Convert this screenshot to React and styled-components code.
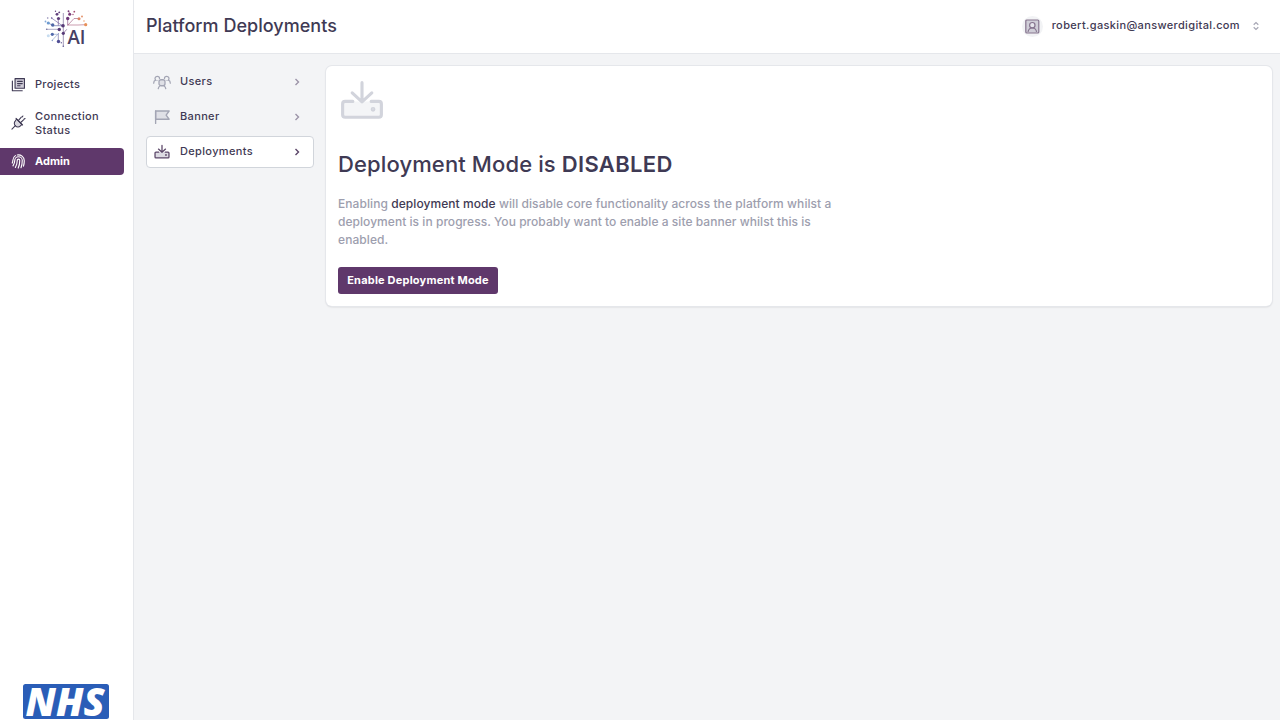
import React from "react";
import styled, { createGlobalStyle } from "styled-components";

const Global = createGlobalStyle`
  *, *::before, *::after { box-sizing: border-box; }
  body { margin: 0; background: #f3f4f6; color: #3f3a54; font: 500 11px/14px Inter, sans-serif; }
  h1, h2, p { margin: 0; }
  svg { display: block; flex: none; }
`;

const Shell = styled.div`
  display: flex;
  height: 100vh;
  overflow: hidden;
`;

const Sidebar = styled.aside`
  display: flex;
  flex-direction: column;
  width: 134px;
  flex: none;
  background: #fff;
  border-right: 1px solid #e5e7eb;
`;

const LogoSlot = styled.div`
  display: flex;
  justify-content: center;
  height: 71px;
  padding-top: 8px;
`;

const Nav = styled.nav`
  display: flex;
  flex-direction: column;
  flex: 1;
  gap: 6px;
  padding-right: 9px;
`;

const NavItem = styled.a`
  display: flex;
  align-items: center;
  gap: 9px;
  min-height: 27px;
  padding: ${(p) => (p.$tall ? "5px 12px 5px 11px" : "0 12px 1px 11px")};
  border-radius: 0 4px 4px 0;
  color: ${(p) => (p.$active ? "#fff" : "#3f3a54")};
  background: ${(p) => (p.$active ? "#5f386b" : "transparent")};
  font-weight: ${(p) => (p.$active ? 700 : 500)};
  letter-spacing: ${(p) => p.$track || 0}px;

  svg { margin-bottom: ${(p) => (p.$tall ? 2 : 0)}px; }
`;

const NhsSlot = styled.div`
  display: flex;
  padding: 0 0 1px 23px;
`;

const Main = styled.div`
  display: flex;
  flex-direction: column;
  flex: 1;
  min-width: 0;
`;

const Header = styled.header`
  display: flex;
  align-items: center;
  justify-content: space-between;
  height: 54px;
  flex: none;
  padding: 0 20px 1px 12px;
  background: #fff;
  border-bottom: 1px solid #e5e7eb;
`;

const PageTitle = styled.h1`
  font-size: 18px;
  line-height: 24px;
  font-weight: 500;
  letter-spacing: 0.03px;
`;

const Account = styled.div`
  display: flex;
  align-items: center;
  font-size: 11px;
  letter-spacing: 0.36px;
`;

const Email = styled.span`
  margin-bottom: 2px;
`;

const Avatar = styled.span`
  display: grid;
  place-items: center;
  width: 21px;
  height: 21px;
  margin-right: 9px;
  border-radius: 50%;
  background: #f2f3f5;
`;

const Chevrons = styled.span`
  margin-left: 12px;
  color: #a6a6b4;
`;

const Content = styled.div`
  display: flex;
  align-items: flex-start;
  gap: 12px;
  padding: 12px 8px 0 12px;
`;

const SubNav = styled.nav`
  display: flex;
  flex-direction: column;
  gap: 3px;
  width: 168px;
  flex: none;
`;

const SubItem = styled.a`
  display: flex;
  align-items: center;
  height: 32px;
  padding: 0 11px 2px 6px;
  border: 1px solid ${(p) => (p.$active ? "#d1d5db" : "transparent")};
  border-radius: 4px;
  background: ${(p) => (p.$active ? "#fff" : "transparent")};
  letter-spacing: 0.35px;
`;

const SubIcon = styled.span`
  margin: 2px 9px 0 0;
  color: ${(p) => (p.$active ? "#5b4668" : "#a3a5b4")};
`;

const SubArrow = styled.span`
  margin: 2px 0 0 auto;
  color: ${(p) => (p.$active ? "#5b4668" : "#9c94a8")};
`;

const Card = styled.section`
  display: flex;
  flex-direction: column;
  align-items: flex-start;
  flex: 1;
  height: 240px;
  padding: 12px;
  border-radius: 6px;
  background: #fff;
  box-shadow: 0 0 0 1px #e5e7eb, 0 1px 2px rgba(0, 0, 0, 0.18);
`;

const CardIcon = styled.div`
  height: 70px;
  margin: -2px 0 2px -1px;
  color: #d2d4dc;
`;

const CardTitle = styled.h2`
  font-size: 22px;
  line-height: 32px;
  font-weight: 500;
  letter-spacing: 0.12px;
  white-space: nowrap;
`;

const Strong = styled.span`
  font-weight: 600;
  letter-spacing: 0.33px;
`;

const Description = styled.p`
  margin-top: 15px;
  color: #9d9eae;
  font-size: 12px;
  line-height: 18px;
`;

const Line = styled.span`
  display: block;
  white-space: nowrap;
  letter-spacing: ${(p) => p.$track}px;
`;

const Mode = styled.span`
  color: #3f3a54;
`;

const Button = styled.button`
  width: 160px;
  height: 27px;
  margin-top: 18px;
  padding: 0 0 1px;
  border: 0;
  border-radius: 3px;
  background: #5f386b;
  color: #fff;
  font: 700 11px/14px Inter, sans-serif;
  letter-spacing: 0.2px;
  white-space: nowrap;
`;

const Icon = ({ size = 16, width = 1.5, children }) => (
  <svg width={size} height={size} viewBox="0 0 24 24" fill="none" stroke="currentColor" strokeWidth={width} strokeLinecap="round" strokeLinejoin="round">
    {children}
  </svg>
);

const ProjectsIcon = () => (
  <Icon size={15} width={1.8}>
    <path d="M6.500 2.500h15v15.500h-15z" fill="#d0cdd8" />
    <path d="M2.200 6.500v15.500H18M10.500 7h7.500M10.500 10.500h7.500M10.500 14h4" />
  </Icon>
);

const PlugIcon = () => (
  <Icon size={15} width={1.7}>
    <path d="M9 6.500l8.500 8.500-2.400 2.400c-2.300 2.300-5.800 2.300-8.100 0s-2.300-5.800 0-8.100z" fill="#d9d7df" />
    <path d="M7 17l-5.500 5.500M8 5.500l10.500 10.500M12 8.500l4.500-5M15.500 12l5-4.500M18 3l1-1.500M21 6.500l1.500-1" />
  </Icon>
);

const FingerprintIcon = () => (
  <Icon size={15} width={1.8}>
    <path d="M2 14.5c.7-1.4 1-2.5 1-4.5a9 9 0 0 1 4-7.4M10 1.5c6-1 11 3 11.2 9 .1 3-.3 6-1.2 9M3.2 19C5 16 6 13 6 10.3a6 6 0 0 1 12 0c0 4-.5 8-2 11.7M7 21.5c2-3.5 3-7 3-11.3a2 2 0 0 1 4 0c0 4.5-.8 8.5-2.5 12.3" />
  </Icon>
);

const UsersIcon = () => (
  <Icon size={18} width={1.7}>
    <rect x="8" y="9" width="8" height="8" rx="2.800" fill="#dfe0e6" />
    <path d="M7 20.800c.2-1.600 1-2.900 2.500-3.800M17 20.800c-.2-1.600-1-2.900-2.500-3.800" />
    <path d="M.9 13.500c0-2.200.8-3.500 2.600-4C1.700 7.600 2.900 4.600 5.700 4.600c1.900 0 3 1.200 3 2.700" />
    <path d="M23.100 13.500c0-2.200-.8-3.500-2.600-4 1.800-1.900.6-4.900-2.200-4.900-1.900 0-3 1.200-3 2.700" />
    <path d="M3.500 9.500c1 .8 2.200.8 3 .2M20.500 9.500c-1 .8-2.200.8-3 .2" strokeWidth=".8" />
  </Icon>
);

const FlagIcon = () => (
  <Icon size={18} width={1.8}>
    <path d="M3.500 4h18l-4 5.500 4 5.500h-18z" fill="#dfe0e6" />
    <path d="M3.500 4v16.500" />
  </Icon>
);

const DeployIcon = ({ size, width = 1.5, fill = "#dcdae2" }) => (
  <Icon size={size} width={width}>
    <path d="M2.700 12.200h18.600v7.600H2.700z" fill={fill} stroke="none" />
    <path d="M7.600 12.200H3.900a1.200 1.200 0 0 0-1.200 1.200v5.200a1.200 1.200 0 0 0 1.200 1.200h16.200a1.200 1.200 0 0 0 1.200-1.200v-5.200a1.200 1.200 0 0 0-1.200-1.200h-3.700M12 3.200v9.200M7.300 8.100l4.700 4.300 4.700-4.300" />
    <circle cx="17.300" cy="16" r=".4" fill="currentColor" />
  </Icon>
);

const PersonIcon = () => (
  <svg width="15" height="15" viewBox="0 0 15 15" fill="none" stroke="#85748e" strokeWidth="1.2">
    <rect x=".8" y="1" width="13" height="13" rx="1" fill="#d0ced8" />
    <circle cx="7.300" cy="6.200" r="2.700" fill="#e6e5ec" />
    <path d="M3 12.800c.5-2.300 2-3.800 4.300-3.800s3.800 1.500 4.300 3.800" />
  </svg>
);

const ChevronIcon = () => (
  <svg width="10" height="10" viewBox="0 0 10 10" fill="none" stroke="currentColor" strokeWidth="1.4">
    <path d="M3.500 2l3 3-3 3" />
  </svg>
);

const rays = [
  ["M23.300 5v33.500", "#64548a"], ["M18.300 10v7.500M17 6.300l2-2", "#674282"], ["M27.700 10v7.500M29.700 6.300l-1-3", "#7e3c78"],
  ["M28 17l6-6.500h5", "#9a5578"], ["M27.500 17H38l7.700-.3", "#a85a78"],
  ["M23 17.700H13l-5-3", "#4f589e"], ["M22 17.500L11.500 10", "#65569a"], ["M6.700 21.300h12.600", "#76729f"],
  ["M17.500 26.300h-5M19 25l-6.500 7", "#8398c6"], ["M18.300 33v-7.500", "#5f5b9b"], ["M23.300 25.300l3.500-4", "#684281"],
];
const dots = [
  [23, 17.700, 1.800, "#573a77"], [23.300, 25.300, 1.600, "#573a77"], [18.500, 10.500, 1.600, "#60407c"], [17, 6.300, 1.400, "#60407c"],
  [19.300, 4.300, .9, "#60407c"], [15.500, 3.300, .7, "#60407c"], [27.700, 10.500, 1.700, "#6e3979"], [29.700, 6.300, 1.500, "#783a78"],
  [28.500, 3.200, .9, "#783a78"], [34.300, 3.700, .9, "#a34e72"], [33, 6.500, .7, "#a34e72"], [39, 10.700, 1.500, "#d98262"],
  [42, 8.500, .9, "#e28a60"], [45.700, 16.700, 1.600, "#e89159"], [44, 13, .7, "#e89159"],
  [8.300, 15, 1.600, "#6e9bd0"], [12.700, 17, 1.700, "#4d66a6"], [5.500, 13.500, .9, "#85abd8"], [7.700, 10, .8, "#8a84b0"], [11.700, 10, .8, "#65569a"],
  [19.300, 21.500, 1.700, "#573a77"], [6.700, 21.300, .8, "#76729f"], [12.300, 26.300, 1.600, "#526aac"], [12.300, 32.500, .7, "#8398c6"],
  [8.300, 27.700, 1.500, "#c7dcf0"], [18.500, 33.500, 1.700, "#4f4d94"], [23.300, 38.300, .8, "#686098"], [21.300, 34.700, .7, "#686098"],
];

const AiLogo = () => (
  <svg width="53" height="42" viewBox="0 0 53 42">
    {rays.map(([d, c]) => <path key={d} d={d} stroke={c} strokeWidth=".6" fill="none" />)}
    {dots.map(([x, y, r, c]) => <circle key={`${x}-${y}`} cx={x} cy={y} r={r} fill={c} />)}
    <text x="27.500" y="35.700" fontFamily="Open Sans, sans-serif" fontSize="20" fontWeight="600" fill="#474063" textLength="18" lengthAdjust="spacingAndGlyphs">AI</text>
  </svg>
);

const NhsLogo = () => (
  <svg width="86" height="35" viewBox="0 0 86 35">
    <rect width="86" height="35" rx="2.500" fill="#2a5db7" />
    <text x="2.500" y="31.500" fontFamily="Open Sans, sans-serif" fontSize="38" fontWeight="800" fontStyle="italic" fill="#fff" textLength="79" lengthAdjust="spacingAndGlyphs">NHS</text>
  </svg>
);

const sections = [
  { label: "Users", icon: <UsersIcon /> },
  { label: "Banner", icon: <FlagIcon /> },
  { label: "Deployments", icon: <DeployIcon size={18} width={1.7} />, active: true },
];

export default function App() {
  return (
    <Shell>
      <Global />
      <Sidebar>
        <LogoSlot><AiLogo /></LogoSlot>
        <Nav>
          <NavItem $track={0.28}><ProjectsIcon />Projects</NavItem>
          <NavItem $tall $track={0.35}><PlugIcon /><span>Connection<br />Status</span></NavItem>
          <NavItem $active $track={0.05}><FingerprintIcon />Admin</NavItem>
        </Nav>
        <NhsSlot><NhsLogo /></NhsSlot>
      </Sidebar>
      <Main>
        <Header>
          <PageTitle>Platform Deployments</PageTitle>
          <Account>
            <Avatar><PersonIcon /></Avatar>
            <Email>robert.gaskin@answerdigital.com</Email>
            <Chevrons>
              <svg width="8" height="10" viewBox="0 0 8 10" fill="none" stroke="currentColor" strokeWidth="1.2">
                <path d="M1.700 3.700L4 1.500l2.300 2.200M1.700 6.300L4 8.500l2.300-2.200" />
              </svg>
            </Chevrons>
          </Account>
        </Header>
        <Content>
          <SubNav>
            {sections.map((s) => (
              <SubItem key={s.label} $active={s.active}>
                <SubIcon $active={s.active}>{s.icon}</SubIcon>
                {s.label}
                <SubArrow $active={s.active}><ChevronIcon /></SubArrow>
              </SubItem>
            ))}
          </SubNav>
          <Card>
            <CardIcon><DeployIcon size={50} fill="#f4f5f7" /></CardIcon>
            <CardTitle>Deployment Mode is <Strong>DISABLED</Strong></CardTitle>
            <Description>
              <Line $track={0.07}>Enabling <Mode>deployment mode</Mode> will disable core functionality across the platform whilst a</Line>
              <Line $track={0.045}>deployment is in progress. You probably want to enable a site banner whilst this is</Line>
              <Line $track={0.08}>enabled.</Line>
            </Description>
            <Button>Enable Deployment Mode</Button>
          </Card>
        </Content>
      </Main>
    </Shell>
  );
}
